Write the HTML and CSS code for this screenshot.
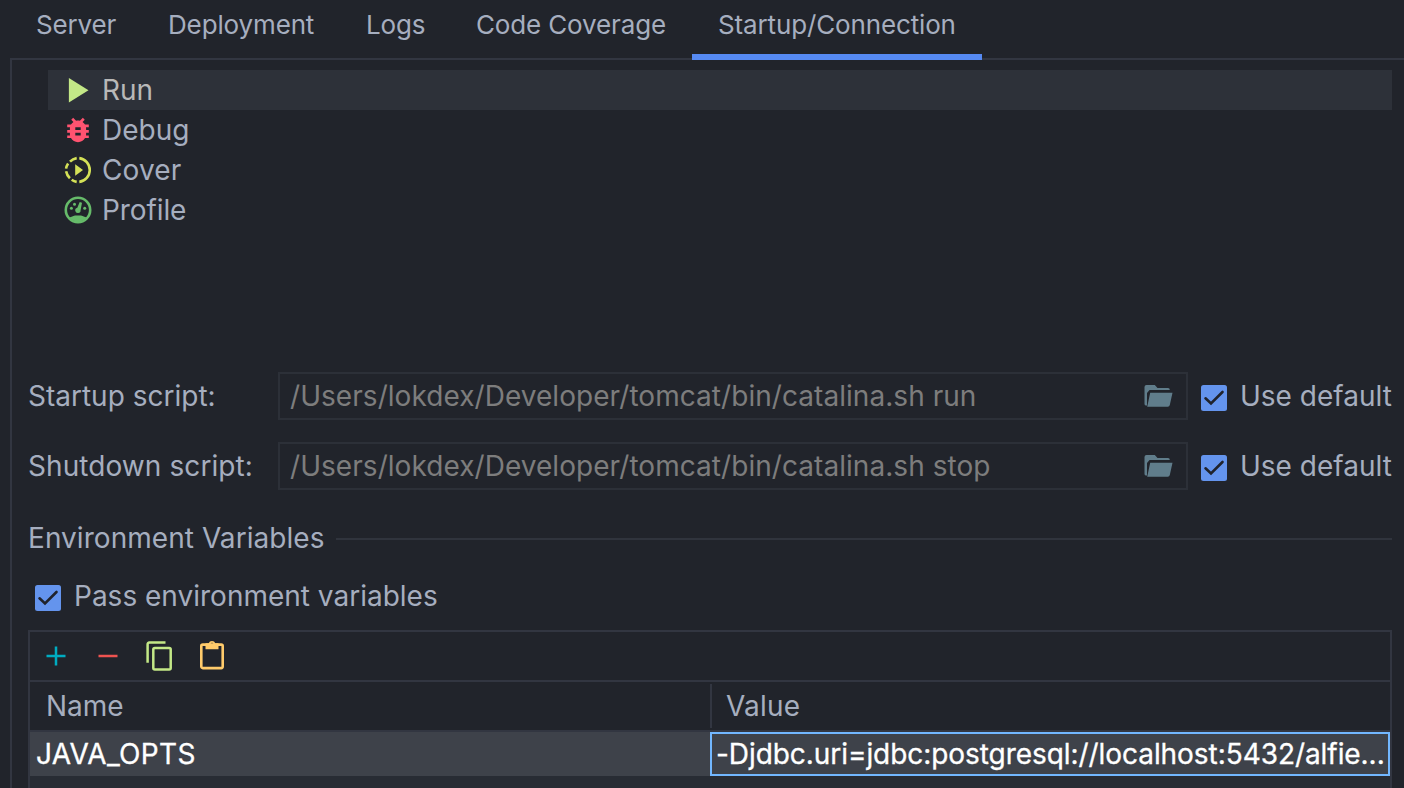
FILE: index.html
```
<!DOCTYPE html>
<html lang="en">
<head>
<meta charset="utf-8">
<title>Startup/Connection</title>
<link rel="stylesheet" href="styles.css">
</head>
<body>
<nav class="tabs">
  <div class="tab tab-server">Server</div>
  <div class="tab tab-deployment">Deployment</div>
  <div class="tab tab-logs">Logs</div>
  <div class="tab tab-coverage">Code Coverage</div>
  <div class="tab tab-startup active">Startup/Connection</div>
</nav>
<main class="panel">
  <ul class="modes">
    <li class="mode selected">
      <svg class="mode-icon" viewBox="0 0 28 28"><path d="M4.900 2 24.500 14.200 4.900 26.400z" fill="#c3e887"/></svg>
      <span>Run</span>
    </li>
    <li class="mode">
      <svg class="mode-icon" viewBox="0 0 28 28"><path transform="translate(-2.200 -2.200) scale(1.350)" fill="#ff5370" d="M20 8h-2.810c-.45-.78-1.070-1.450-1.820-1.960L17 4.410 15.590 3l-2.170 2.170C12.960 5.060 12.490 5 12 5s-.96.06-1.410.17L8.410 3 7 4.410l1.620 1.630C7.880 6.550 7.260 7.220 6.810 8H4v2h2.090c-.05.33-.09.66-.09 1v1H4v2h2v1c0 .34.04.67.09 1H4v2h2.810c1.040 1.790 2.970 3 5.190 3s4.150-1.210 5.190-3H20v-2h-2.090c.05-.33.09-.66.09-1v-1h2v-2h-2v-1c0-.34-.04-.67-.09-1H20V8zm-6 8h-4v-2h4v2zm0-4h-4v-2h4v2z"/></svg>
      <span>Debug</span>
    </li>
    <li class="mode">
      <svg class="mode-icon" viewBox="0 0 28 28"><g fill="none" stroke="#d4e157" stroke-width="2.600"><path d="M15.300 2.100a12 12 0 0 1 0 23.800M12.700 25.900a12 12 0 0 1-5-2.100M5.900 22.200a12 12 0 0 1-3.800-6.900M2.100 12.700a12 12 0 0 1 2-5.300M6 5.700a12 12 0 0 1 6.700-3.600"/></g><path d="M11.200 8.300 19 14l-7.800 5.700z" fill="#d4e157"/></svg>
      <span class="cover">Cover</span>
    </li>
    <li class="mode">
      <svg class="mode-icon" viewBox="0 0 28 28"><circle cx="14" cy="14" r="12.200" fill="none" stroke="#66bb6a" stroke-width="2.600"/><g fill="#66bb6a"><path d="M5.200 21.500C8 21 8.500 19.700 11 19.400h6c2.500.3 3 1.600 5.800 2.100A11.500 11.500 0 0 1 14 25.500a11.500 11.500 0 0 1-8.800-4z"/><path d="M15.700 6 18 6.800 16.600 14.200A2.700 2.700 0 1 1 13.300 11.700z"/><circle cx="7.400" cy="12.300" r="1.500"/><circle cx="10.500" cy="8.300" r="1.500"/><circle cx="20.700" cy="12.300" r="1.500"/></g></svg>
      <span class="profile">Profile</span>
    </li>
  </ul>

  <section class="scripts">
    <div class="script-row">
      <label class="script-label">Startup script:</label>
      <div class="field"><span class="path">/Users/lokdex/Developer/tomcat/bin/catalina.sh run</span>
        <svg class="folder" viewBox="0 0 30 24"><path fill="#607d8b" d="M1.500 3Q1.500 1 3.500 1h8.300l2.700 3H25q1.800 0 1.800 2H6.500L4 9v12.500Q1.500 22 1.500 20zM7.200 8.800H29.500L26.800 21q-.4 1.700-2 1.700H4.200z"/></svg>
      </div>
      <svg class="check" viewBox="0 0 26 26"><rect width="26" height="26" rx="2.500" fill="#6494ed"/><path d="M4.500 13.300 10 18.500 21.500 7" fill="none" stroke="#20232b" stroke-width="2.600" stroke-linecap="round"/></svg>
      <span class="default">Use default</span>
    </div>
    <div class="script-row">
      <label class="script-label shutdown-label">Shutdown script:</label>
      <div class="field"><span class="path">/Users/lokdex/Developer/tomcat/bin/catalina.sh stop</span>
        <svg class="folder" viewBox="0 0 30 24"><path fill="#607d8b" d="M1.500 3Q1.500 1 3.500 1h8.300l2.700 3H25q1.800 0 1.800 2H6.500L4 9v12.500Q1.500 22 1.500 20zM7.200 8.800H29.500L26.800 21q-.4 1.700-2 1.700H4.200z"/></svg>
      </div>
      <svg class="check" viewBox="0 0 26 26"><rect width="26" height="26" rx="2.500" fill="#6494ed"/><path d="M4.500 13.300 10 18.500 21.500 7" fill="none" stroke="#20232b" stroke-width="2.600" stroke-linecap="round"/></svg>
      <span class="default">Use default</span>
    </div>
  </section>

  <h2 class="heading"><span>Environment Variables</span></h2>
  <div class="pass-row">
    <svg class="check" viewBox="0 0 26 26"><rect width="26" height="26" rx="2.500" fill="#6494ed"/><path d="M4.500 13.300 10 18.500 21.500 7" fill="none" stroke="#20232b" stroke-width="2.600" stroke-linecap="round"/></svg>
    <span class="pass">Pass environment variables</span>
  </div>

  <section class="table">
    <div class="toolbar">
      <svg class="tool" viewBox="0 0 32 32"><path d="M6.500 16h19M16 6.500v19" stroke="#00acc1" stroke-width="2.500"/></svg>
      <svg class="tool" viewBox="0 0 32 32"><path d="M6.500 16h19" stroke="#ef5350" stroke-width="2.500"/></svg>
      <svg class="tool" viewBox="0 0 32 32"><g fill="none" stroke="#c3e887" stroke-width="2.500"><path d="M3.600 22.700V4.300Q3.600 2.600 5.300 2.600H21.500"/><rect x="9.300" y="8" width="17.400" height="21.500" rx="1.500"/></g></svg>
      <svg class="tool" viewBox="0 0 32 32"><rect x="5.300" y="4.600" width="21.400" height="23.500" rx="1.500" fill="none" stroke="#ffcb6b" stroke-width="2.600"/><path fill="#ffcb6b" fill-rule="evenodd" d="M9.500 3.300h3.200a3.500 3.500 0 0 1 6.600 0h3.200v6h-13zM16 2.700a1.400 1.400 0 1 0 0 2.800 1.400 1.400 0 0 0 0-2.800z"/></svg>
    </div>
    <div class="table-head">
      <div class="col-name">Name</div>
      <div class="col-value">Value</div>
    </div>
    <div class="table-row">
      <div class="cell-name">JAVA_OPTS</div>
      <div class="cell-value">-Djdbc.uri=jdbc:postgresql://localhost:5432/alfie...</div>
    </div>
  </section>
</main>
</body>
</html>
```
FILE: styles.css
```
* { box-sizing: border-box; }
body {
  margin: 0;
  width: 1404px;
  height: 788px;
  overflow: hidden;
  display: flex;
  flex-direction: column;
  background: #21242b;
  color: #a6aebf;
  font: 28px/40px Inter, sans-serif;
  white-space: nowrap;
}
svg { display: block; flex: none; }
.tabs {
  display: flex;
  height: 60px;
  flex: none;
  margin-left: 10px;
  box-shadow: inset 0 -2px #323641;
}
.tab {
  padding: 5px 0 0 26px;
  font-size: 26px;
  letter-spacing: -0.14px;
}
.tab-server { width: 132px; }
.tab-deployment { width: 198px; }
.tab-logs { width: 110px; }
.tab-coverage { width: 242px; }
.tab-startup { width: 290px; }
.active { border-bottom: 6px solid #568af2; }
.panel {
  flex: 1;
  margin-left: 10px;
  border-left: 2px solid #323641;
  padding: 10px 12px 0 16px;
}
.modes {
  list-style: none;
  margin: 0;
  padding: 0 0 0 20px;
  height: 302px;
}
.mode {
  display: flex;
  align-items: center;
  height: 40px;
  padding-left: 16px;
  gap: 10px;
}
.selected { background: #2d3139; color: #b8b8b8; }
.mode-icon { width: 28px; height: 28px; }
.cover { letter-spacing: 0.15px; }
.profile { letter-spacing: -0.1px; }
.scripts { display: flex; flex-direction: column; gap: 22px; }
.script-row { display: flex; align-items: center; height: 48px; }
.script-label { flex: none; width: 250px; }
.shutdown-label { letter-spacing: 0.08px; }
.field {
  display: flex;
  flex: none;
  justify-content: space-between;
  align-items: center;
  width: 910px;
  height: 48px;
  border: 2px solid #2c3038;
  padding: 0 13px 0 10px;
  color: #7d7d7d;
}
.path { letter-spacing: 0.05px; }
.folder { width: 30px; height: 24px; }
.check { width: 26px; height: 26px; margin-top: 4px; }
.script-row .check { margin-left: 13px; margin-right: 13px; }
.heading {
  display: flex;
  align-items: center;
  gap: 11px;
  margin: 28px 0 0;
  height: 40px;
  font-size: 28px;
  font-weight: 400;
  letter-spacing: 0.05px;
}
.heading::after { content: ""; flex: 1; height: 2px; margin-top: 2px; background: #30343d; }
.pass-row { display: flex; align-items: center; gap: 13px; height: 40px; margin: 18px 0 14px; padding-left: 7px; }
.table { border: 2px solid #323641; border-bottom: 0; height: 158px; background: #282c34; }
.toolbar { display: flex; align-items: center; gap: 20px; height: 50px; padding-left: 10px; border-bottom: 2px solid #323641; background: #21242b; }
.tool { width: 32px; height: 32px; }
.table-head { display: flex; height: 50px; padding: 2px 0; border-bottom: 2px solid #323641; background: #21242b; line-height: 45px; }
.col-name { width: 680px; padding-left: 16px; }
.col-value { border-left: 2px solid #323641; padding-left: 14px; letter-spacing: 0.2px; }
.table-row { display: flex; height: 44px; background: #3e424a; color: #fff; line-height: 44px; -webkit-text-stroke: 0.3px #fff; }
.cell-name { width: 680px; padding-left: 6px; letter-spacing: 0.35px; }
.cell-value { width: 680px; border: 2px solid #72b7ff; padding-left: 4px; line-height: 40px; letter-spacing: -0.06px; }
```
